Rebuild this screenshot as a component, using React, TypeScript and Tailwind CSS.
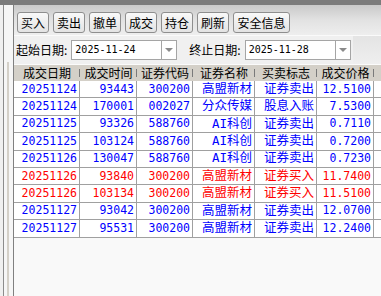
const buttons = ['买入', '卖出', '撤单', '成交', '持仓', '刷新']

const columns = [
  { title: '成交日期', width: 'w-[66px]' },
  { title: '成交时间', width: 'w-[57px]' },
  { title: '证券代码', width: 'w-[56px]' },
  { title: '证券名称', width: 'w-[62px]' },
  { title: '买卖标志', width: 'w-[62px]' },
  { title: '成交价格', width: 'w-[57px]' },
]

type Trade = {
  date: string
  time: string
  code: string
  name: string
  flag: string
  price: string
  buy?: boolean
}

const trades: Trade[] = [
  { date: '20251124', time: '93443', code: '300200', name: '高盟新材', flag: '证券卖出', price: '12.5100' },
  { date: '20251124', time: '170001', code: '002027', name: '分众传媒', flag: '股息入账', price: '7.5300' },
  { date: '20251125', time: '93326', code: '588760', name: 'AI科创', flag: '证券卖出', price: '0.7110' },
  { date: '20251125', time: '103124', code: '588760', name: 'AI科创', flag: '证券卖出', price: '0.7200' },
  { date: '20251126', time: '130047', code: '588760', name: 'AI科创', flag: '证券卖出', price: '0.7230' },
  { date: '20251126', time: '93840', code: '300200', name: '高盟新材', flag: '证券买入', price: '11.7400', buy: true },
  { date: '20251126', time: '103134', code: '300200', name: '高盟新材', flag: '证券买入', price: '11.5100', buy: true },
  { date: '20251127', time: '93042', code: '300200', name: '高盟新材', flag: '证券卖出', price: '12.0700' },
  { date: '20251127', time: '95531', code: '300200', name: '高盟新材', flag: '证券卖出', price: '12.2400' },
]

const cjk = "font-['Noto_Sans_CJK_SC',sans-serif]"
const mono = "font-['DejaVu_Sans_Mono','Noto_Sans_CJK_SC',monospace]"

function DateBox({ value }: { value: string }) {
  return (
    <div className="flex h-[20px] w-[106px] border border-[#a5a5a5] bg-white">
      <div className={`flex-1 pl-[3px] text-[10px] leading-[18px] text-black ${mono}`}>{value}</div>
      <div className="flex w-[15px] items-center justify-center border-l border-[#a5a5a5]">
        <div className="h-0 w-0 border-x-[4px] border-t-[4px] border-x-transparent border-t-[#8a8a8a]" />
      </div>
    </div>
  )
}

export default function App() {
  return (
    <div className="flex h-[296px] w-[381px] flex-col overflow-hidden bg-[#f0f0f0]">
      <div className="h-[5px] shrink-0 bg-[#7b7b7b]" />
      <div className="flex min-h-0 flex-1">
        {/* left splitter */}
        <div className="flex w-[14px] shrink-0">
          <div className="w-[3px] bg-[#f0f0f0]" />
          <div className="w-px bg-[#8c8c8c]" />
          <div className="w-[3px] bg-[#f6f6f6]" />
          <div className="flex w-[2px] flex-col">
            <div className="h-[57px] bg-[#f6f6f6]" />
            <div className="flex-1 bg-[#d4d0c8]" />
          </div>
          <div className="w-[4px] bg-[#f6f6f6]" />
          <div className="w-px bg-[#808080]" />
        </div>

        <div className="flex min-w-0 flex-1 flex-col">
          {/* toolbar */}
          <div className="flex h-[31px] shrink-0 items-start gap-[4px] border-b border-[#fafafa] bg-linear-to-b from-[#c9c9c9] via-[#e2e2e2] to-[#eeeeee] pl-[3px] pt-[7px]">
            {[...buttons, '安全信息'].map(b => (
              <div key={b}
                className={`flex h-[21px] items-center justify-center rounded-[3px] border border-[#8e8e8e] bg-linear-to-b from-[#f9f9f9] to-[#e3e3e3] text-[12px] text-black ${cjk} ${b.length > 2 ? 'w-[57px]' : 'w-[32px]'}`}>
                {b}
              </div>
            ))}
          </div>

          {/* date range */}
          <div className="flex h-[28px] shrink-0">
            <div className="flex items-center bg-[#f0f0f0] pb-[1px] pl-[2px] pr-[2px]">
              <span className={`mr-[4px] text-[12px] text-black ${cjk}`}>起始日期:</span>
              <DateBox value="2025-11-24" />
              <span className={`ml-[12px] mr-[4px] text-[12px] text-black ${cjk}`}>终止日期:</span>
              <DateBox value="2025-11-28" />
            </div>
            <div className="flex-1 bg-linear-to-b from-[#e4e4e4] to-[#efefef]" />
          </div>

          {/* table */}
          <div className="flex-1 overflow-hidden bg-[#f9f9f9]">
            <div className="flex h-[17px] w-max border-t border-[#fbfbfb] bg-[#d4d0c8]">
              {columns.map(c => (
                <div key={c.title} className={`relative flex items-center justify-center text-[12px] text-black ${cjk} ${c.width}`}>
                  {c.title}
                  <div className="absolute right-0 top-[4px] h-[8px] w-px bg-[#7a7a7a]" />
                </div>
              ))}
              <div className="w-[60px]" />
            </div>
            {trades.map((t, i) => {
              const color = t.buy ? 'text-[#ff0000]' : 'text-[#0000ff]'
              const cell = 'flex h-full items-center justify-end border-r border-[#a0a0a0] pr-[2px]'
              return (
                <div key={i} className={`flex h-[17.4px] w-max border-b border-[#a0a0a0] bg-white ${color}`}>
                  <div className={`${cell} w-[66px] text-[11.5px] ${mono}`}>{t.date}</div>
                  <div className={`${cell} w-[57px] text-[11.5px] ${mono}`}>{t.time}</div>
                  <div className={`${cell} w-[56px] text-[11.5px] ${mono}`}>{t.code}</div>
                  <div className={`${cell} w-[62px] text-[12.5px] ${mono}`}>{t.name}</div>
                  <div className={`${cell} w-[62px] text-[12.5px] ${mono}`}>{t.flag}</div>
                  <div className={`${cell} w-[57px] text-[11.5px] ${mono}`}>{t.price}</div>
                  <div className="w-[60px]" />
                </div>
              )
            })}
          </div>
        </div>
      </div>
    </div>
  )
}
